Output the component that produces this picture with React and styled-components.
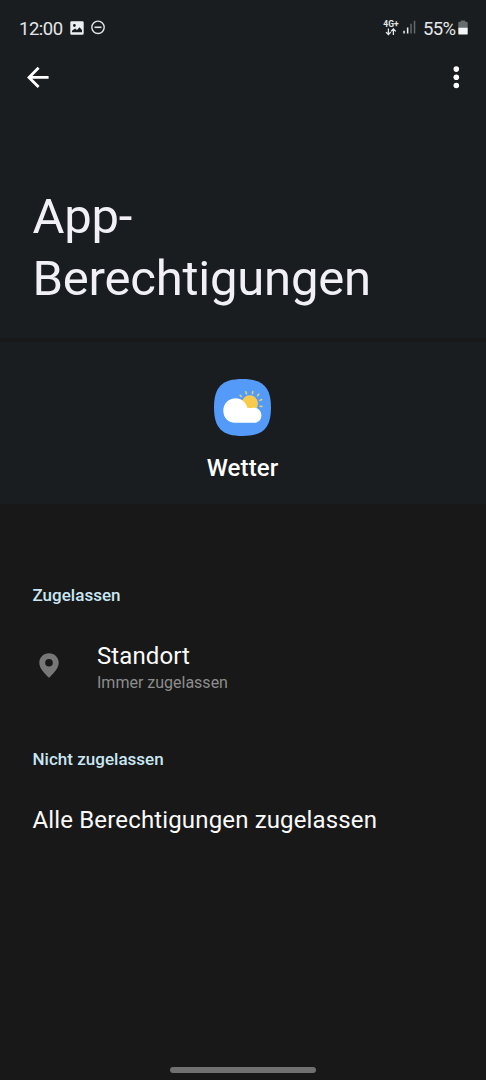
import styled, { createGlobalStyle } from "styled-components";


const App = () => {
 return (
  <Screen>
    <GlobalStyle />
    <Header>
      <StatusBar>
        <Clock>12:00</Clock>
        <PictureIcon />
        <DndIcon />
        <Spacer />
        <Network>
          <span>4G+</span>
          <ArrowsIcon />
        </Network>
        <SignalIcon />
        <Percent>55%</Percent>
        <BatteryIcon />
      </StatusBar>
      <Toolbar>
        <IconButton aria-label="Zurück">
          <BackIcon />
        </IconButton>
        <IconButton aria-label="Mehr">
          <MoreIcon />
        </IconButton>
      </Toolbar>
      <Title>App-<br />Berechtigungen</Title>
    </Header>

    <AppCard>
      <WeatherIcon />
      <AppName>Wetter</AppName>
    </AppCard>

    <Permissions>
      <Category>Zugelassen</Category>
      <PermissionRow>
        <PinIcon />
        <div>
          <Label>Standort</Label>
          <Summary>Immer zugelassen</Summary>
        </div>
      </PermissionRow>
      <Category>Nicht zugelassen</Category>
      <EmptyRow>
        <Label $spacing="0.15px">Alle Berechtigungen zugelassen</Label>
      </EmptyRow>
    </Permissions>

    <NavArea>
      <NavHandle />
    </NavArea>
  </Screen>
 )
};

const PictureIcon = () => (
  <Picture viewBox="0 0 14 14" width="14" height="14">
    <path fill="#eceff0" fillRule="evenodd" d="M1.6 0.3h10.8a1.3 1.3 0 0 1 1.3 1.3v10.8a1.3 1.3 0 0 1-1.3 1.3H1.6a1.3 1.3 0 0 1-1.3-1.3V1.6A1.3 1.3 0 0 1 1.6 0.3zM2 11.3h10V9L9.5 6.2 7 9 5 7.5 2 9.8zM4.4 3.1a1.4 1.4 0 1 0 0 2.8a1.4 1.4 0 0 0 0-2.8z" />
  </Picture>
);

const DndIcon = () => (
  <Dnd viewBox="0 0 14 14" width="14" height="14" fill="none" stroke="#e3e7e8" strokeWidth="1.4">
    <circle cx="7" cy="7.3" r="6.2" />
    <path d="M3.5 7.3h7" strokeWidth="1.6" />
  </Dnd>
);

const ArrowsIcon = () => (
  <svg viewBox="0 0 12 8" width="12" height="8" fill="none" stroke="#e3e7e8" strokeWidth="1.3">
    <path d="M3.4 0.5v5.8M1 4.1l2.4 2.4 2.4-2.4M8.4 7V1.2M6 3.4l2.4-2.4 2.4 2.4" />
  </svg>
);

const SignalIcon = () => (
  <Signal viewBox="0 0 13 14" width="13" height="14">
    <path fill="#eceff0" d="M0.3 10.7h1.5V13.5H0.3zM3.9 7.5h1.5v6H3.9z" />
    <path fill="#62686b" d="M7.3 3.8h1.5v9.7H7.3zM10.8 0.8h1.5v12.7h-1.5z" />
  </Signal>
);

const BatteryIcon = () => (
  <Battery viewBox="0 0 10 15" width="10" height="15">
    <path fill="#676c6f" d="M2.8 0.4h4.4v1.4H8.6a1.1 1.1 0 0 1 1.1 1.1V8H0.3V2.9a1.1 1.1 0 0 1 1.1-1.1h1.4z" />
    <path fill="#f4f5f5" d="M0.3 7.8h9.4v5.6a1.2 1.2 0 0 1-1.2 1.2h-7a1.2 1.2 0 0 1-1.2-1.2z" />
  </Battery>
);

const BackIcon = () => (
  <svg viewBox="0 0 24 24" width="24" height="24" fill="none" stroke="#fff" strokeWidth="2.8">
    <path d="M23.6 12.4H4.6M13.6 2.8L4 12.4l9.6 9.6" />
  </svg>
);

const MoreIcon = () => (
  <svg viewBox="0 0 24 24" width="24" height="24" fill="#fff">
    <circle cx="12.3" cy="4.1" r="2.8" />
    <circle cx="12.3" cy="12.3" r="2.8" />
    <circle cx="12.3" cy="20.5" r="2.8" />
  </svg>
);

const WeatherIcon = () => (
  <Weather viewBox="0 0 57 57" width="57" height="57">
    <path fill="#549af8" d="M28.5 0C8 0 0 8 0 28.5S8 57 28.5 57 57 49 57 28.5 49 0 28.5 0z" />
    <g stroke="#e3d374" strokeWidth="1.5" strokeLinecap="round">
      <path d="M26.1 16.2l1.2 1.3M31.8 12.8l0.7 2M38.8 12.5l-0.4 2M44.8 15.2l-1.2 1.6M47.8 20.5l-2 0.9M46 27.2l2 0.3" />
    </g>
    <circle cx="35.8" cy="24.5" r="8.2" fill="#f8cb4c" />
    <path fill="#fff" d="M21.9 19.2c5.4 0 9.8 3.8 11.4 9.5 1.8 0.2 3.2 0.5 4.2 0.4 0.9-0.3 1.7-0.4 2.7-0.4 4.1 0 7.2 3.3 7.2 7.7 0 4.2-3.1 7.3-7 7.3H20.8c-6.8 0-11.5-5-11.5-12.2 0-7 5.4-12.3 12.6-12.3z" />
  </Weather>
);

const PinIcon = () => (
  <Pin viewBox="0 0 20 26" width="20" height="26">
    <path fill="#777" fillRule="evenodd" d="M10 0.3C4.5 0.3 0.3 4.5 0.3 9.8c0 6 5.6 10.6 9 14.5q0.7 0.8 1.4 0c3.4-3.9 9-8.5 9-14.5 0-5.3-4.2-9.5-9.7-9.5zM10 6a3.8 3.8 0 1 1 0 7.6a3.8 3.8 0 0 1 0-7.6z" />
  </Pin>
);

const GlobalStyle = createGlobalStyle`
body {
  margin: 0;
  background-color: #181818;
  font-family: Roboto, "Liberation Sans", sans-serif;
}
`;

// whole phone screen
const Screen = styled.div`
display: flex;
flex-direction: column;
width: 486px;
height: 1080px;
overflow: hidden;
background-color: #181818;
`;

const Header = styled.header`
height: 338px;
box-sizing: border-box;
background-color: #1a1d20;
`;

// status bar style
const StatusBar = styled.div`
display: flex;
align-items: flex-start;
height: 53px;
padding: 0 18px 0 19px;
box-sizing: border-box;
color: #e3e7e8;
`;

const Clock = styled.span`
width: 51px;
margin-top: 18px;
font-size: 18.5px;
line-height: 22px;
letter-spacing: -0.5px;
`;

const Picture = styled.svg`
margin-top: 21px;
`;

const Dnd = styled.svg`
margin: 20px 0 0 7px;
overflow: visible;
`;

const Spacer = styled.div`
flex: 1;
`;

// network type over its arrows
const Network = styled.div`
display: flex;
flex-direction: column;
align-items: center;
width: 16px;
margin: 20px 4px 0 0;

span {
  font-size: 8.5px;
  font-weight: 700;
  line-height: 8px;
}
`;

const Signal = styled.svg`
margin-top: 20px;
`;

const Percent = styled.span`
width: 35px;
margin: 18px 0 0 7px;
font-size: 18.5px;
line-height: 22px;
white-space: nowrap;
letter-spacing: -0.6px;
`;

const Battery = styled.svg`
margin-top: 20px;
`;

// toolbar style
const Toolbar = styled.div`
display: flex;
justify-content: space-between;
padding: 0 18px 0 25px;
`;

const IconButton = styled.button`
display: flex;
align-items: center;
justify-content: center;
width: 24px;
height: 48px;
padding: 0;
border: none;
background: transparent;
`;

// title style
const Title = styled.h1`
margin: 85px 0 0;
padding-left: 32.5px;
font-size: 49px;
font-weight: 400;
line-height: 62px;
letter-spacing: -0.22px;
color: #f1f0f7;
`;

// app card style
const AppCard = styled.section`
display: flex;
flex-direction: column;
align-items: center;
height: 162px;
margin-top: 4px;
padding: 37px 1px 0 0;
box-sizing: border-box;
background-color: #191d20;
`;

const Weather = styled.svg`
flex: none;
`;

const AppName = styled.h2`
margin: 18px 0 0;
font-size: 24px;
font-weight: 500;
line-height: 28px;
letter-spacing: 0.1px;
color: #fff;
`;

// permission list style
const Permissions = styled.main`
flex: 1;
padding: 81px 32px 0 32.5px;
`;

const Category = styled.h3`
margin: 0;
font-size: 17px;
font-weight: 500;
line-height: 20px;
letter-spacing: 0.02px;
color: #c9e6f3;
`;

const PermissionRow = styled.div`
display: flex;
align-items: flex-start;
height: 107px;
margin-top: 37px;
`;

const Pin = styled.svg`
margin: 11px 38.5px 0 6px;
`;

const Label = styled.div`
font-size: 24px;
line-height: 28px;
letter-spacing: ${(props) => props.$spacing || "0.1px"};
color: #fafafa;
white-space: nowrap;
`;

const Summary = styled.div`
margin-top: 3px;
font-size: 16px;
line-height: 20px;
color: #8d8d8d;
`;

const EmptyRow = styled.div`
margin-top: 37px;
`;

// gesture bar style
const NavArea = styled.footer`
display: flex;
justify-content: center;
height: 13px;
`;

const NavHandle = styled.div`
width: 146px;
height: 6px;
border-radius: 3px;
background-color: #707070;
`;


export default App;
